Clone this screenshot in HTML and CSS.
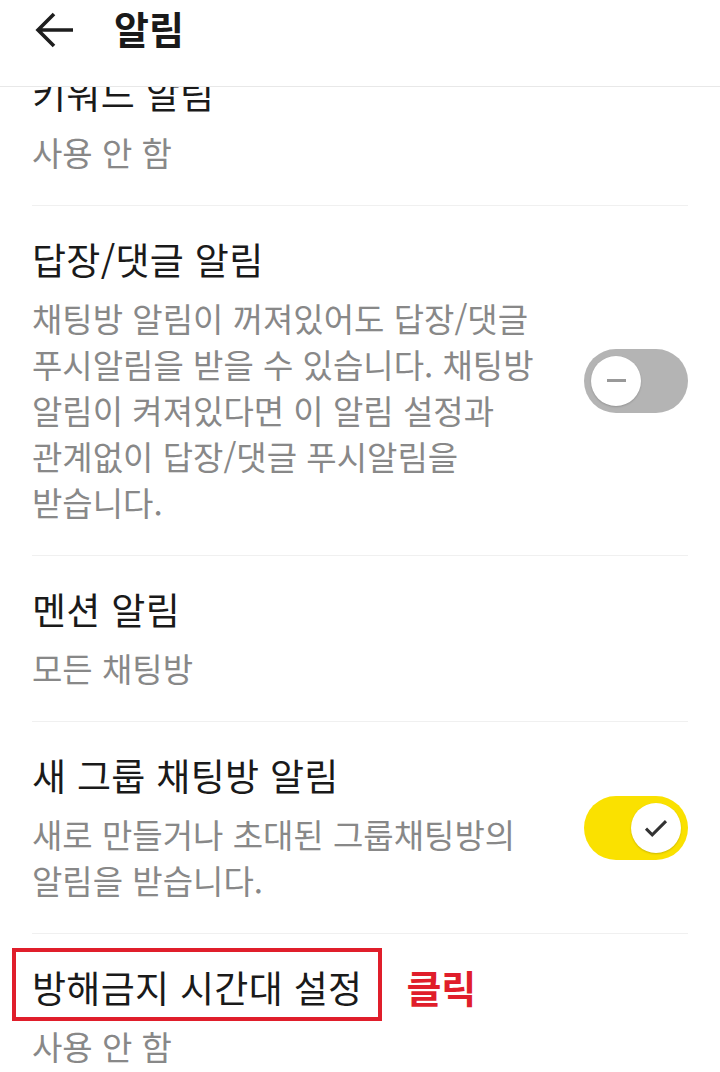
FILE: index.html
```html
<!DOCTYPE html>
<html lang="ko">
<head>
<meta charset="utf-8">
<title>알림</title>
<link rel="stylesheet" href="styles.css">
</head>
<body>
<header class="topbar">
  <button class="back" aria-label="뒤로">
    <svg viewBox="0 0 40 40" width="40" height="40"><path d="M38 20H4M19 4L3 20l16 16" fill="none" stroke="#1e1e1e" stroke-width="3.6" stroke-linecap="butt" stroke-linejoin="miter"/></svg>
  </button>
  <h1 class="title">알림</h1>
</header>
<main class="list">
  <section class="item first">
    <div class="text">
      <div class="name">키워드 알림</div>
      <div class="desc">사용 안 함</div>
    </div>
  </section>
  <section class="item">
    <div class="text">
      <div class="name">답장/댓글 알림</div>
      <div class="desc">채팅방 알림이 꺼져있어도 답장/댓글 푸시알림을 받을 수 있습니다. 채팅방 알림이 켜져있다면 이 알림 설정과 관계없이 답장/댓글 푸시알림을 받습니다.</div>
    </div>
    <div class="toggle off"><span class="knob"><span class="minus"></span></span></div>
  </section>
  <section class="item">
    <div class="text">
      <div class="name">멘션 알림</div>
      <div class="desc">모든 채팅방</div>
    </div>
  </section>
  <section class="item">
    <div class="text">
      <div class="name">새 그룹 채팅방 알림</div>
      <div class="desc">새로 만들거나 초대된 그룹채팅방의 알림을 받습니다.</div>
    </div>
    <div class="toggle on"><span class="knob"><svg viewBox="0 0 24 24" width="30" height="30"><path d="M4 12.5l5 5L20 6.5" fill="none" stroke="#333" stroke-width="2.4"/></svg></span></div>
  </section>
  <section class="item last">
    <div class="text">
      <div class="name-row"><span class="name marked">방해금지 시간대 설정</span><span class="click">클릭</span></div>
      <div class="desc">사용 안 함</div>
    </div>
  </section>
</main>
</body>
</html>
```
FILE: styles.css
```css
* { box-sizing: border-box; }
html, body {
  margin: 0;
  padding: 0;
  background: #fff;
  height: 1072px;
  overflow: hidden;
}
body {
  font-family: "Noto Sans CJK KR", "Noto Sans", sans-serif;
  color: #1a1a1a;
}
.topbar {
  height: 87px;
  border-bottom: 1px solid #e8e8e8;
  display: flex;
  align-items: flex-start;
  padding: 10px 0 0 35px;
  background: #fff;
  position: relative;
  z-index: 2;
}
.back {
  width: 40px;
  height: 40px;
  border: 0;
  background: none;
  padding: 0;
  margin: 0;
  display: flex;
}
.title {
  margin: -2px 0 0 39px;
  font-size: 38px;
  line-height: 40px;
  font-weight: 700;
  color: #1a1a1a;
}
.list {
  height: 985px;
  overflow: hidden;
  padding: 0 32px;
}
.item {
  display: flex;
  align-items: center;
  gap: 24px;
  padding: 30px 0 30px;
  border-bottom: 1px solid #f0f0f0;
}
.item.first { margin-top: -47px; }
.item.last { border-bottom: 0; }
.text { flex: 1; min-width: 0; }
.name {
  font-size: 37px;
  line-height: 46px;
  letter-spacing: 0.3px;
  color: #1a1a1a;
}
.desc {
  margin-top: 13px;
  font-size: 33px;
  line-height: 46px;
  color: #888;
  word-break: keep-all;
}
.toggle {
  flex: none;
  width: 104px;
  height: 64px;
  border-radius: 32px;
  display: flex;
  align-items: center;
  padding: 0 7px;
}
.toggle.off { background: #b4b4b4; justify-content: flex-start; }
.toggle.on { background: #fae100; justify-content: flex-end; }
.knob {
  width: 50px;
  height: 50px;
  border-radius: 50%;
  background: #fff;
  display: flex;
  align-items: center;
  justify-content: center;
  box-shadow: 0 1px 2px rgba(0,0,0,0.18);
}
.minus {
  width: 19px;
  height: 3px;
  background: #999;
}
.name-row {
  display: flex;
  align-items: center;
  gap: 44px;
}
.marked {
  position: relative;
}
.marked::after {
  content: "";
  position: absolute;
  left: -20px;
  right: -20px;
  top: -16px;
  bottom: -11px;
  border: 4px solid #e01e2b;
}
.click {
  font-size: 38px;
  line-height: 46px;
  font-weight: 700;
  color: #e01e2b;
}
```
